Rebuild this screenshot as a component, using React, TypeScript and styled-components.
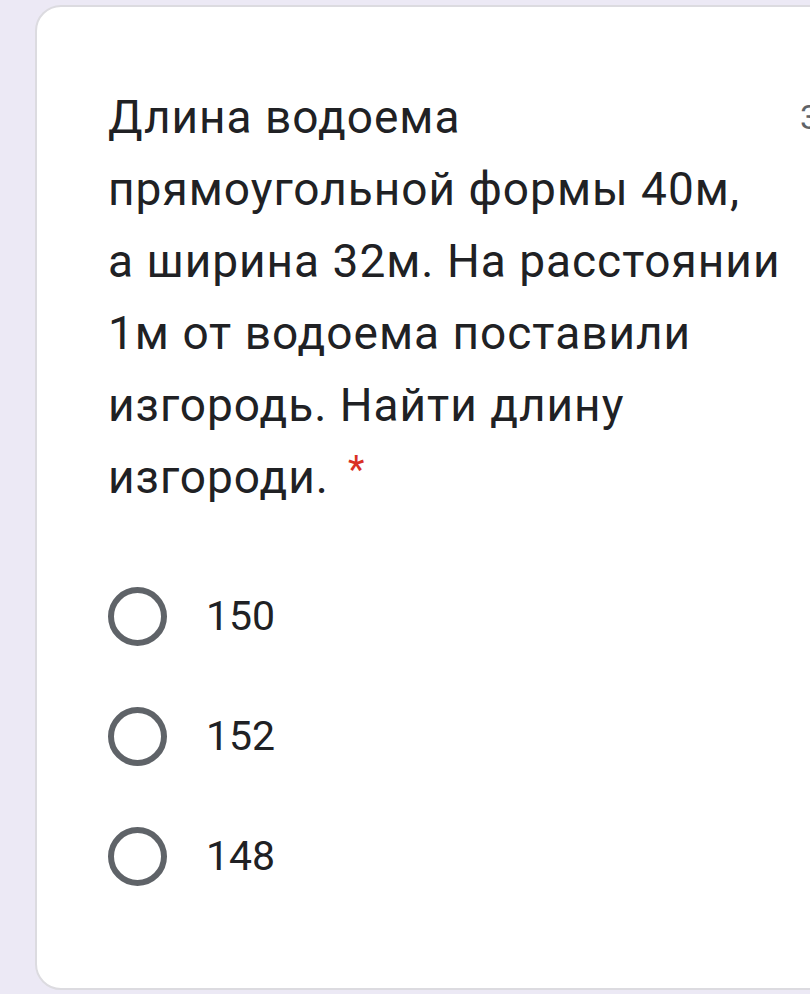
import styled, { createGlobalStyle } from 'styled-components'

const GlobalStyle = createGlobalStyle`
  html, body {
    margin: 0;
    padding: 0;
    background: #ece9f5;
    overflow: hidden;
  }
`

const Page = styled.div`
  width: 810px;
  height: 994px;
  padding: 5px 0 0 35px;
  box-sizing: border-box;
  font-family: Roboto, 'Noto Sans', sans-serif;
  color: #202124;
`

const Card = styled.div`
  width: 820px;
  height: 985px;
  box-sizing: border-box;
  background: #ffffff;
  border: 2px solid #dcdbe0;
  border-radius: 26px;
  padding: 74px 0 0 71px;
`

const Header = styled.div`
  display: flex;
  align-items: flex-start;
  gap: 20px;
`

const Question = styled.div`
  width: 672px;
  flex-shrink: 0;
  font-size: 46px;
  line-height: 72px;
  letter-spacing: 1px;
`

const Line = styled.span`
  display: block;
  white-space: nowrap;
`

const Required = styled.span`
  color: #d93025;
  font-size: 38px;
  line-height: 0;
  margin-left: 19px;
  vertical-align: 10px;
`

const Points = styled.div`
  font-size: 34px;
  line-height: 72px;
  color: #5f6368;
  white-space: nowrap;
`

const Options = styled.div`
  display: flex;
  flex-direction: column;
  margin-top: 43px;
`

const Option = styled.label`
  display: flex;
  align-items: center;
  height: 120px;
  gap: 39px;
`

const Circle = styled.span`
  width: 59px;
  height: 59px;
  box-sizing: border-box;
  border: 6px solid #5f6368;
  border-radius: 50%;
  flex-shrink: 0;
`

const OptionLabel = styled.span`
  font-size: 41px;
  color: #202124;
`

const lines = [
  'Длина водоема',
  'прямоугольной формы 40м,',
  'а ширина 32м. На расстоянии',
  '1м от водоема поставили',
  'изгородь. Найти длину'
]

const options = ['150', '152', '148']

export default function App() {
  return (
    <>
      <GlobalStyle />
      <Page>
        <Card>
          <Header>
            <Question>
              {lines.map((l) => (
                <Line key={l}>{l}</Line>
              ))}
              <Line>
                изгороди.<Required>*</Required>
              </Line>
            </Question>
            <Points>3 балла</Points>
          </Header>
          <Options>
            {options.map((o) => (
              <Option key={o}>
                <Circle />
                <OptionLabel>{o}</OptionLabel>
              </Option>
            ))}
          </Options>
        </Card>
      </Page>
    </>
  )
}
